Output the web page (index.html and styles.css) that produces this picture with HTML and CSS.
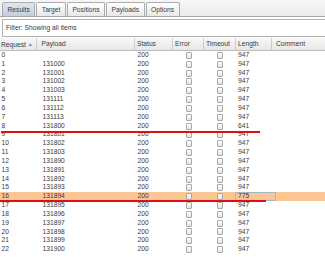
FILE: index.html
```html
<!DOCTYPE html>
<html>
<head>
<meta charset="utf-8">
<link rel="stylesheet" href="styles.css">
</head>
<body>
<div class="tabs">
  <div class="tab active">Results</div>
  <div class="tab">Target</div>
  <div class="tab">Positions</div>
  <div class="tab">Payloads</div>
  <div class="tab">Options</div>
</div>
<div class="filter">Filter: Showing all items</div>
<div class="grid">
  <div class="row head">
    <div class="hc c-req">Request <span class="sort">▲</span></div>
    <div class="hc c-pay">Payload</div>
    <div class="hc c-st">Status</div>
    <div class="hc c-err">Error</div>
    <div class="hc c-to">Timeout</div>
    <div class="hc c-len">Length</div>
    <div class="hc c-com">Comment</div>
  </div>
  <div class="row"><div class="c c-req">0</div><div class="c c-pay"></div><div class="c c-st">200</div><div class="c c-err"><span class="cb"></span></div><div class="c c-to"><span class="cb"></span></div><div class="c c-len">947</div><div class="c c-com"></div></div>
  <div class="row"><div class="c c-req">1</div><div class="c c-pay">131000</div><div class="c c-st">200</div><div class="c c-err"><span class="cb"></span></div><div class="c c-to"><span class="cb"></span></div><div class="c c-len">947</div><div class="c c-com"></div></div>
  <div class="row"><div class="c c-req">2</div><div class="c c-pay">131001</div><div class="c c-st">200</div><div class="c c-err"><span class="cb"></span></div><div class="c c-to"><span class="cb"></span></div><div class="c c-len">947</div><div class="c c-com"></div></div>
  <div class="row"><div class="c c-req">3</div><div class="c c-pay">131002</div><div class="c c-st">200</div><div class="c c-err"><span class="cb"></span></div><div class="c c-to"><span class="cb"></span></div><div class="c c-len">947</div><div class="c c-com"></div></div>
  <div class="row"><div class="c c-req">4</div><div class="c c-pay">131003</div><div class="c c-st">200</div><div class="c c-err"><span class="cb"></span></div><div class="c c-to"><span class="cb"></span></div><div class="c c-len">947</div><div class="c c-com"></div></div>
  <div class="row"><div class="c c-req">5</div><div class="c c-pay">131111</div><div class="c c-st">200</div><div class="c c-err"><span class="cb"></span></div><div class="c c-to"><span class="cb"></span></div><div class="c c-len">947</div><div class="c c-com"></div></div>
  <div class="row"><div class="c c-req">6</div><div class="c c-pay">131112</div><div class="c c-st">200</div><div class="c c-err"><span class="cb"></span></div><div class="c c-to"><span class="cb"></span></div><div class="c c-len">947</div><div class="c c-com"></div></div>
  <div class="row"><div class="c c-req">7</div><div class="c c-pay">131113</div><div class="c c-st">200</div><div class="c c-err"><span class="cb"></span></div><div class="c c-to"><span class="cb"></span></div><div class="c c-len">947</div><div class="c c-com"></div></div>
  <div class="row mark1"><div class="c c-req">8</div><div class="c c-pay">131800</div><div class="c c-st">200</div><div class="c c-err"><span class="cb"></span></div><div class="c c-to"><span class="cb"></span></div><div class="c c-len">641</div><div class="c c-com"></div></div>
  <div class="row"><div class="c c-req">9</div><div class="c c-pay">131801</div><div class="c c-st">200</div><div class="c c-err"><span class="cb"></span></div><div class="c c-to"><span class="cb"></span></div><div class="c c-len">947</div><div class="c c-com"></div></div>
  <div class="row"><div class="c c-req">10</div><div class="c c-pay">131802</div><div class="c c-st">200</div><div class="c c-err"><span class="cb"></span></div><div class="c c-to"><span class="cb"></span></div><div class="c c-len">947</div><div class="c c-com"></div></div>
  <div class="row"><div class="c c-req">11</div><div class="c c-pay">131803</div><div class="c c-st">200</div><div class="c c-err"><span class="cb"></span></div><div class="c c-to"><span class="cb"></span></div><div class="c c-len">947</div><div class="c c-com"></div></div>
  <div class="row"><div class="c c-req">12</div><div class="c c-pay">131890</div><div class="c c-st">200</div><div class="c c-err"><span class="cb"></span></div><div class="c c-to"><span class="cb"></span></div><div class="c c-len">947</div><div class="c c-com"></div></div>
  <div class="row"><div class="c c-req">13</div><div class="c c-pay">131891</div><div class="c c-st">200</div><div class="c c-err"><span class="cb"></span></div><div class="c c-to"><span class="cb"></span></div><div class="c c-len">947</div><div class="c c-com"></div></div>
  <div class="row"><div class="c c-req">14</div><div class="c c-pay">131892</div><div class="c c-st">200</div><div class="c c-err"><span class="cb"></span></div><div class="c c-to"><span class="cb"></span></div><div class="c c-len">947</div><div class="c c-com"></div></div>
  <div class="row"><div class="c c-req">15</div><div class="c c-pay">131893</div><div class="c c-st">200</div><div class="c c-err"><span class="cb"></span></div><div class="c c-to"><span class="cb"></span></div><div class="c c-len">947</div><div class="c c-com"></div></div>
  <div class="row sel mark2"><div class="c c-req">16</div><div class="c c-pay">131894</div><div class="c c-st">200</div><div class="c c-err"><span class="cb"></span></div><div class="c c-to"><span class="cb"></span></div><div class="c c-len focus">775</div><div class="c c-com"></div></div>
  <div class="row"><div class="c c-req">17</div><div class="c c-pay">131895</div><div class="c c-st">200</div><div class="c c-err"><span class="cb"></span></div><div class="c c-to"><span class="cb"></span></div><div class="c c-len">947</div><div class="c c-com"></div></div>
  <div class="row"><div class="c c-req">18</div><div class="c c-pay">131896</div><div class="c c-st">200</div><div class="c c-err"><span class="cb"></span></div><div class="c c-to"><span class="cb"></span></div><div class="c c-len">947</div><div class="c c-com"></div></div>
  <div class="row"><div class="c c-req">19</div><div class="c c-pay">131897</div><div class="c c-st">200</div><div class="c c-err"><span class="cb"></span></div><div class="c c-to"><span class="cb"></span></div><div class="c c-len">947</div><div class="c c-com"></div></div>
  <div class="row"><div class="c c-req">20</div><div class="c c-pay">131898</div><div class="c c-st">200</div><div class="c c-err"><span class="cb"></span></div><div class="c c-to"><span class="cb"></span></div><div class="c c-len">947</div><div class="c c-com"></div></div>
  <div class="row"><div class="c c-req">21</div><div class="c c-pay">131899</div><div class="c c-st">200</div><div class="c c-err"><span class="cb"></span></div><div class="c c-to"><span class="cb"></span></div><div class="c c-len">947</div><div class="c c-com"></div></div>
  <div class="row"><div class="c c-req">22</div><div class="c c-pay">131900</div><div class="c c-st">200</div><div class="c c-err"><span class="cb"></span></div><div class="c c-to"><span class="cb"></span></div><div class="c c-len">947</div><div class="c c-com"></div></div>
</div>
</body>
</html>
```

FILE: styles.css
```css
html, body {
  margin: 0;
  padding: 0;
  background: #ffffff;
  overflow: hidden;
}
body {
  font-family: "Liberation Sans", Arial, sans-serif;
  font-size: 6.7px;
  color: #3a3a3a;
}
.tabs {
  display: flex;
  align-items: flex-end;
  height: 16px;
  padding-left: 2px;
  background: linear-gradient(#f6f6f6, #ececec);
  border-bottom: 1px solid #a6a6a6;
}
.tab {
  height: 13px;
  line-height: 13px;
  padding: 0 4.5px;
  margin-right: 1px;
  border: 1px solid #acacac;
  border-bottom: none;
  border-radius: 2px 2px 0 0;
  background: linear-gradient(#ffffff, #e8e8e8);
  color: #3a3a3a;
}
.tab.active {
  background: linear-gradient(#dfe7ef, #c2cfdc);
}
.filter {
  margin: 2px 0 0 2px;
  height: 16px;
  line-height: 16px;
  padding-left: 3px;
  border: 1px solid #b0b0b0;
  border-right: none;
  background: #ffffff;
}
.grid {
  margin-top: 1px;
}
.row {
  display: grid;
  grid-template-columns: 37px 98px 38px 31px 32px 36px 53px;
  height: 8.84px;
  line-height: 8.84px;
  position: relative;
}
.row.head {
  height: 12px;
  line-height: 12px;
  background: linear-gradient(#f8f8f8, #e6e6e6);
  border-bottom: 1px solid #bcbcbc;
}
.hc {
  padding-left: 2px;
  border-right: 1px solid #cdcdcd;
  white-space: nowrap;
  overflow: hidden;
  color: #3a3a3a;
}
.hc.c-req { padding-left: 1px; }
.hc.c-pay { padding-left: 4.5px; }
.hc.c-com { border-right: none; padding-left: 4px; }
.sort {
  color: #6a8cc0;
  font-size: 5px;
  vertical-align: 1px;
}
.c {
  padding-left: 2.5px;
  white-space: nowrap;
  overflow: hidden;
}
.c.c-req { padding-left: 1.5px; }
.c.c-pay { padding-left: 5.5px; }
.c.c-len { padding-left: 2px; }
.c.c-err, .c.c-to {
  padding-left: 0;
  display: flex;
  align-items: center;
  justify-content: center;
}
.cb {
  width: 4px;
  height: 5px;
  border: 1px solid #a8a8a8;
  border-radius: 1px;
  background: linear-gradient(#ffffff, #e4e4e4);
}
.row.sel {
  background: #fcc594;
}
.c.focus {
  box-shadow: inset 0 0 0 1px #a3b6ca;
  margin-left: -1px;
  padding-left: 3px;
  width: 38px;
}
.row.mark1::after {
  content: "";
  position: absolute;
  left: 1px;
  top: calc(100% + 1px);
  width: 259px;
  height: 2px;
  background: #e01010;
  z-index: 2;
}
.row.mark2::after {
  content: "";
  position: absolute;
  left: 0;
  bottom: -0.6px;
  width: 266px;
  height: 2px;
  background: #e01010;
  z-index: 2;
}
```
